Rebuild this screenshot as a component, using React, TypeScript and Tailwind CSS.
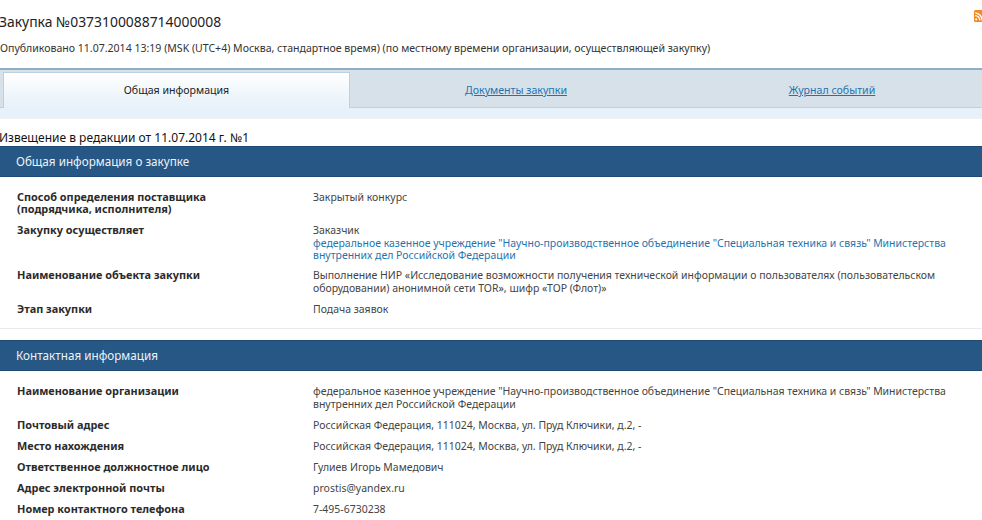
const LINK = 'text-[#1f74b0]';

function Rss() {
  return (
    <svg width="9" height="12" viewBox="0 0 9 12" className="block">
      <rect width="9" height="12" rx="1.5" fill="#f08a24" />
      <circle cx="2.2" cy="9.3" r="1.1" fill="#fff" />
      <path d="M1.2 5.6a4.6 4.6 0 0 1 4.6 4.8M1.2 2.8a7.4 7.4 0 0 1 6.8 7.6" fill="none" stroke="#fff" strokeWidth="1.3" />
    </svg>
  );
}

function Row({ label, children, className }: { label: React.ReactNode; children: React.ReactNode; className: string }) {
  return (
    <div className={`flex pl-[17px] pr-[30px] ${className}`}>
      <div className="w-[296px] shrink-0 font-bold text-[10.9px] leading-[12px] text-[#2b2b2b]">{label}</div>
      <div className="text-[10.48px] leading-[12.5px] text-[#444]">{children}</div>
    </div>
  );
}

function SectionHeader({ title }: { title: string }) {
  return (
    <div className="h-[31px] bg-[#275785] border-y border-y-[#1f4a73] pl-[16px] text-[11.7px] leading-[29px] text-[#eef3f8]">
      {title}
    </div>
  );
}

export default function App() {
  return (
    <div className="w-[982px] h-[520px] overflow-hidden bg-white text-[10.55px] font-['Noto_Sans','DejaVu_Sans',sans-serif]">
      <div className="h-[68px] pt-[13px]">
        <div className="flex justify-between items-start">
          <h1 className="text-[13.9px] leading-[17px] text-[#222] -ml-[1px]">Закупка №0373100088714000008</h1>
          <div className="mt-[-3px] w-[8px] overflow-hidden"><Rss /></div>
        </div>
        <p className="mt-[11px] leading-[14px] text-[#333]">
          Опубликовано 11.07.2014 13:19 (MSK (UTC+4) Москва, стандартное время) (по местному времени организации, осуществляющей закупку)
        </p>
      </div>

      <div className="h-[51px] bg-[#e6f1f9] border-t-2 border-t-[#8fb0c4] border-b border-b-[#eef1f3]">
        <div className="flex h-[38px] bg-[#d6e1ea] border-b border-b-[#c3d0da] pl-[3px] text-[10.6px]">
          <div className="w-[347px] h-[36px] mt-[2px] bg-gradient-to-b from-white to-[#e6f1f9] border-t border-x border-[#bfd0dc] text-center leading-[35px] text-[#222]">
            Общая информация
          </div>
          <div className={`w-[332px] text-center leading-[41px] underline ${LINK}`}>Документы закупки</div>
          <div className={`w-[300px] text-center leading-[41px] underline ${LINK}`}>Журнал событий</div>
        </div>
      </div>

      <div className="mt-[12px] h-[15px] -ml-[1px] text-[12px] leading-[14px] text-[#111]">Извещение в редакции от 11.07.2014 г. №1</div>
      <SectionHeader title="Общая информация о закупке" />

      <div className="pt-[14px] h-[152px] border-b border-b-[#e6ebef]">
        <Row label={<>Способ определения поставщика<br />(подрядчика, исполнителя)</>} className="h-[33px]">Закрытый конкурс</Row>
        <Row label="Закупку осуществляет" className="h-[45px]">
          Заказчик
          <br />
          <span className={LINK}>федеральное казенное учреждение "Научно-производственное объединение "Специальная техника и связь" Министерства внутренних дел Российской Федерации</span>
        </Row>
        <Row label="Наименование объекта закупки" className="h-[34px]">
          Выполнение НИР «Исследование возможности получения технической информации о пользователях (пользовательском оборудовании) анонимной сети TOR», шифр «ТОР (Флот)»
        </Row>
        <Row label="Этап закупки" className="h-[14px]">Подача заявок</Row>
      </div>

      <div className="mt-[11px]">
        <SectionHeader title="Контактная информация" />
      </div>

      <div className="pt-[14px]">
        <Row label="Наименование организации" className="h-[34px]">
          федеральное казенное учреждение "Научно-производственное объединение "Специальная техника и связь" Министерства внутренних дел Российской Федерации
        </Row>
        <Row label="Почтовый адрес" className="h-[21px]">Российская Федерация, 111024, Москва, ул. Пруд Ключики, д.2, -</Row>
        <Row label="Место нахождения" className="h-[21px]">Российская Федерация, 111024, Москва, ул. Пруд Ключики, д.2, -</Row>
        <Row label="Ответственное должностное лицо" className="h-[21px]">Гулиев Игорь Мамедович</Row>
        <Row label="Адрес электронной почты" className="h-[21px]">prostis@yandex.ru</Row>
        <Row label="Номер контактного телефона" className="h-[21px]">7-495-6730238</Row>
      </div>
    </div>
  );
}
